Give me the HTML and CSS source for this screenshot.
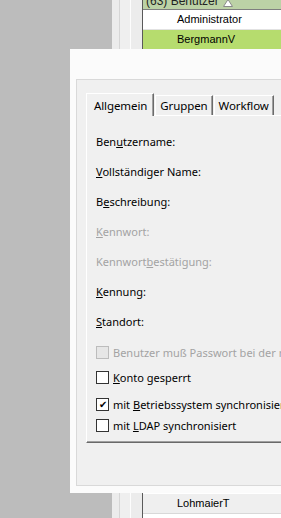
FILE: index.html
```html
<!DOCTYPE html>
<html lang="de">
<head>
  <meta charset="UTF-8">
  <title>Benutzer</title>
  <link rel="stylesheet" href="styles.css">
</head>
<body>
  <div class="screen">
    <div class="gutter"></div>
    <div class="splitter">
      <span class="strip a"></span>
      <span class="strip b"></span>
      <span class="strip c"></span>
    </div>
    <div class="list">
      <div class="list-head">
        <span class="head-text">(63) Benutzer</span>
        <svg class="sort" width="10" height="8" viewBox="0 0 10 8"><path d="M5 0.5 L9.5 7.5 L0.5 7.5 Z" fill="#fff" stroke="#8a8a8a" stroke-width="1"/></svg>
      </div>
      <div class="row">Administrator</div>
      <div class="row sel">BergmannV</div>
      <div class="hidden-rows"></div>
      <div class="row alt">LohmaierT</div>
      <div class="row"></div>
    </div>
  </div>

  <div class="dialog">
    <div class="frame">
      <div class="tabs">
        <div class="tab active">Allgemein</div>
        <div class="tab">Gruppen</div>
        <div class="tab">Workflow</div>
      </div>
      <div class="page">
        <div class="fields">
          <div class="field">Ben<u>u</u>tzername:</div>
          <div class="field"><u>V</u>ollständiger Name:</div>
          <div class="field">B<u>e</u>schreibung:</div>
          <div class="field off"><u>K</u>ennwort:</div>
          <div class="field off">Kennwort<u>b</u>estätigung:</div>
          <div class="field"><u>K</u>ennung:</div>
          <div class="field"><u>S</u>tandort:</div>
        </div>
        <div class="checks">
          <div class="check off"><span class="box"></span><span>Benutzer muß Passwort bei der nächsten Anmeldung ändern</span></div>
          <div class="check c2"><span class="box"></span><span><u>K</u>onto gesperrt</span></div>
          <div class="check c3"><span class="box on">&#10004;</span><span>mit <u>B</u>etriebssystem synchronisiert</span></div>
          <div class="check c4"><span class="box"></span><span>mit <u>L</u>DAP synchronisiert</span></div>
        </div>
      </div>
    </div>
  </div>
</body>
</html>
```

FILE: styles.css
```css
body {
  margin: 0;
  width: 281px;
  height: 518px;
  overflow: hidden;
  position: relative;
  background: #bcbcbc;
}
.screen {
  display: flex;
  height: 518px;
  overflow: hidden;
}
.gutter {
  width: 112px;
  background: #bcbcbc;
}
.splitter {
  display: flex;
  width: 30px;
}
.strip.a {
  width: 7px;
  background: #ececec;
  border-right: 1px solid #d6d6d6;
}
.strip.b {
  width: 10px;
  background: #efefef;
  border-right: 1px solid #fdfdfd;
}
.strip.c {
  width: 11px;
  background: #ececec;
}
.list {
  flex: 1;
  display: flex;
  flex-direction: column;
  background: #fff;
  border-left: 1px solid #5a5a5a;
  font-family: "Liberation Sans", Arial, sans-serif;
  font-size: 11px;
  color: #000;
}
.list-head {
  height: 9px;
  flex-shrink: 0;
  background: #bcd2a6;
  border-bottom: 1px solid #7f7f7f;
  display: flex;
  align-items: flex-end;
  overflow: hidden;
  padding-left: 3px;
  font-size: 12px;
  color: #222;
}
.head-text {
  line-height: 12px;
  margin-bottom: 2px;
}
.sort {
  margin: 0 0 2px 4px;
}
.row {
  height: 19px;
  line-height: 19px;
  padding-left: 34px;
  border-bottom: 1px solid #e2e2e2;
  flex-shrink: 0;
}
.row.sel {
  background: #b6dc6e;
  border-bottom-color: #b6dc6e;
}
.row.alt {
  background: #efefef;
  border-bottom-color: #d8d8d8;
}
.hidden-rows {
  height: 444px;
  flex-shrink: 0;
}

/* dialog window */
.dialog {
  position: absolute;
  left: 70px;
  top: 49px;
  width: 230px;
  height: 444px;
  background: #fbfbfb;
  font-family: "Noto Sans", "Open Sans", sans-serif;
  font-size: 11px;
  color: #000;
}
.frame {
  margin: 30px 0 0 6px;
  height: 407px;
  background: #f0f0f0;
  border: 1px solid #d9d9d9;
  border-right: none;
  padding: 13px 0 0 9px;
  box-sizing: border-box;
}
.tabs {
  display: flex;
  align-items: flex-end;
  height: 22px;
  position: relative;
  z-index: 1;
}
.tab {
  height: 19px;
  line-height: 19px;
  padding: 0 4px 0 4px;
  border-left: 1px solid #fff;
  border-top: 1px solid #fff;
  border-right: 1px solid #6b6b6b;
  box-shadow: inset -1px 0 0 #a0a0a0;
  background: #f0f0f0;
  white-space: nowrap;
  font-size: 11.5px;
  letter-spacing: -0.1px;
}
.tab.active {
  height: 22px;
  line-height: 23px;
  padding: 0 6px 0 7px;
  margin-bottom: -1px;
}
.tab + .tab {
  margin-left: 1px;
}
.page {
  height: 328px;
  border-top: 1px solid #fff;
  border-left: 1px solid #fff;
  border-bottom: 1px solid #696969;
  box-shadow: inset 0 -1px 0 #a0a0a0;
  box-sizing: border-box;
  padding: 11px 0 0 9px;
  overflow: hidden;
}
.fields {
  display: flex;
  flex-direction: column;
}
.field {
  height: 30px;
  line-height: 30px;
  white-space: nowrap;
}
.off {
  color: #a3a3a3;
}
.checks {
  display: flex;
  flex-direction: column;
  margin-top: 7px;
}
.check {
  display: flex;
  align-items: center;
  height: 16px;
  white-space: nowrap;
}
.check.c2 {
  margin-top: 9px;
}
.check.c3 {
  margin-top: 11px;
}
.check.c4 {
  margin-top: 5px;
}
.box {
  width: 11px;
  height: 11px;
  border: 1px solid #333;
  background: #fff;
  margin-right: 4px;
  flex-shrink: 0;
  font-size: 10px;
  line-height: 11px;
  text-align: center;
  color: #000;
}
.check.off .box {
  border-color: #bcbcbc;
  background: #e6e6e6;
}
```
